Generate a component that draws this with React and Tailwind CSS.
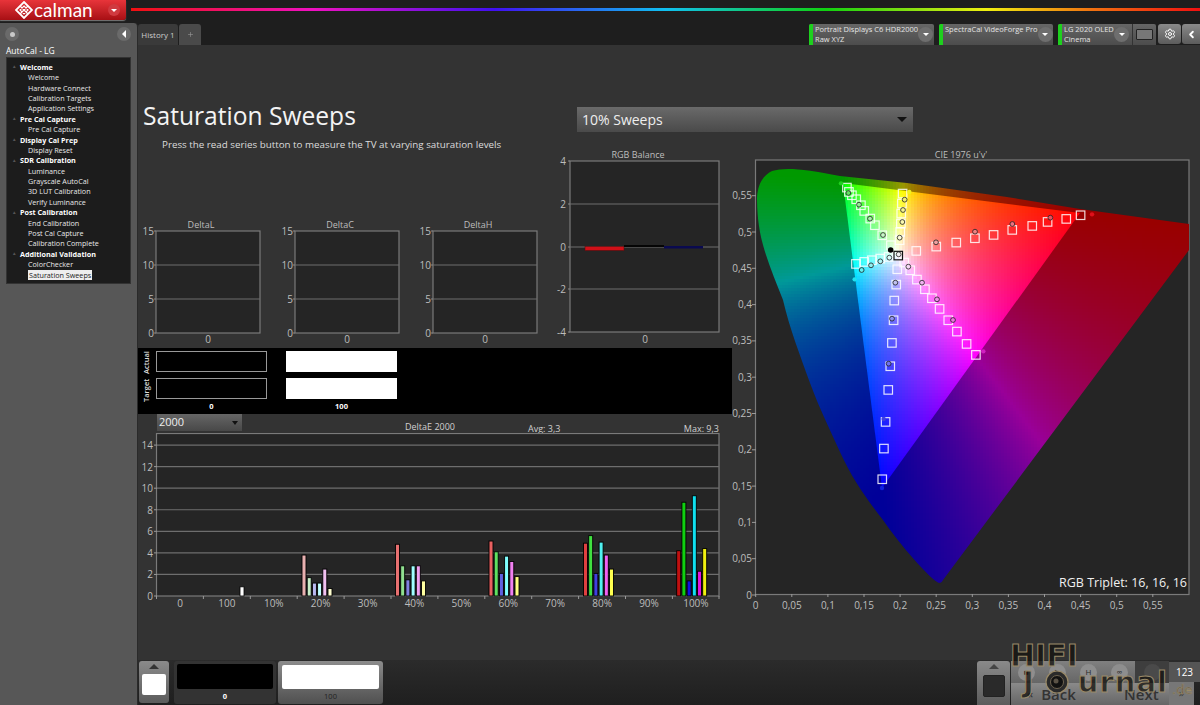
import { useMemo } from 'react'
import { Settings, Plus, ChevronLeft } from 'lucide-react'

const tree = [
  ['Welcome', ['Welcome', 'Hardware Connect', 'Calibration Targets', 'Application Settings']],
  ['Pre Cal Capture', ['Pre Cal Capture']],
  ['Display Cal Prep', ['Display Reset']],
  ['SDR Calibration', ['Luminance', 'Grayscale AutoCal', '3D LUT Calibration', 'Verify Luminance']],
  ['Post Calibration', ['End Calibration', 'Post Cal Capture', 'Calibration Complete']],
  ['Additional Validation', ['ColorChecker', 'Saturation Sweeps']],
]

// gamut triangle and white point, in page pixels
const R = [1080, 213]
const G = [843, 183]
const B = [882, 488]
const W = [898, 255]

const locus = 'M939 583 C931 580 900 545 883 520 C865 497 852 478 840 452 C828 425 820 410 810 383 C800 355 790 330 783 300 C775 280 768 263 763 245 C758 227 757 210 757 197 C758 185 762 176 772 171 C785 167 805 169 840 176 L907 183 L1007 197 L1080 209 L1189 224 L1189 250 L943 580 C942 582 941 583 939 583 Z'
const triangle = `M${R[0]} ${R[1]} L${G[0]} ${G[1]} L${B[0]} ${B[1]} Z`

function bary(x, y) {
  const d = (G[1] - B[1]) * (R[0] - B[0]) + (B[0] - G[0]) * (R[1] - B[1])
  const r = ((G[1] - B[1]) * (x - B[0]) + (B[0] - G[0]) * (y - B[1])) / d
  const g = ((B[1] - R[1]) * (x - B[0]) + (R[0] - B[0]) * (y - B[1])) / d
  return [r, g, 1 - r - g]
}

const whiteW = bary(W[0], W[1])

function colorAt(x, y, k, gamma) {
  const w = bary(x, y).map((v, i) => Math.max(v, 0) / whiteW[i])
  const m = Math.max(...w)
  const [r, g, b] = w.map(v => Math.round(255 * k * Math.pow(v / m, gamma)))
  return `rgb(${r},${g},${b})`
}

function cells(k, gamma) {
  const out = []
  for (let y = 165; y < 590; y += 3) {
    for (let x = 755; x < 1190; x += 3) {
      out.push(<rect key={`${x}-${y}`} x={x} y={y} width="3" height="3" fill={colorAt(x + 1.5, y + 1.5, k, gamma)} />)
    }
  }
  return out
}

const zx = v => 740 + v / 3
const zy = v => 150 + v / 3

const squares = [
  [1021, 195], [978, 206], [922, 215], [876, 227], [816, 239], [760, 254], [704, 264], [648, 277], [588, 289], [528, 302],
  [492, 337], [510, 360], [530, 388], [554, 417], [575, 444], [598, 476], [624, 510], [650, 544], [679, 581], [707, 614],
  [471, 357], [468, 403], [462, 451], [460, 510], [455, 578], [450, 648], [444, 719], [436, 815], [431, 895], [426, 987],
  [320, 112], [326, 125], [335, 135], [348, 147], [362, 165], [372, 182], [390, 205], [404, 225], [426, 255], [452, 285],
  [487, 130], [485, 160], [483, 190], [482, 220], [480, 245], [478, 270],
  [347, 341], [372, 335], [395, 330], [420, 325], [445, 320],
]

const dots = [
  [1056, 193, '#e0101a', 0], [931, 203, '#e85060', 1], [817, 222, '#ee7080', 1], [705, 245, '#f08080', 1], [588, 277, '#f0a0a0', 1],
  [303, 100, '#20d020', 0], [325, 129, '#60e060', 1], [357, 164, '#90ee90', 1], [390, 206, '#a8f0a8', 1], [429, 255, '#c8f8c8', 1],
  [508, 126, '#f0f020', 0], [494, 149, '#f0f070', 1], [489, 180, '#f5f590', 1], [487, 216, '#f8f8b0', 1], [479, 263, '#fcfcd8', 1],
  [344, 388, '#20e0f0', 0], [365, 360, '#60f0f0', 1], [393, 346, '#90f0f0', 1], [421, 334, '#b0f5f5', 1], [448, 323, '#d8fafa', 1],
  [730, 604, '#d020c0', 0], [639, 510, '#f070e0', 1], [591, 448, '#f090e8', 1], [546, 398, '#f0b0f0', 1], [505, 350, '#f8d8f8', 1],
  [426, 1014, '#1020e0', 0], [431, 807, '#4040e0', 0], [446, 641, '#7070f0', 1], [456, 506, '#9090f0', 1], [466, 398, '#c0c0f0', 1],
  [476, 313, '#f0f0f0', 1],
]

const barGroups = [
  [304, [3.8, 1.7, 1.2, 1.2, 2.5, 0.7], ['#e8b0b0', '#c8eec8', '#b8b8f0', '#c0ffff', '#f0c0f0', '#ffffd0']],
  [397.5, [4.8, 2.8, 1.5, 2.8, 2.8, 1.4], ['#e87070', '#90e090', '#8080e0', '#a0ffff', '#f0a0f0', '#ffffa0']],
  [491, [5.1, 4.1, 2.1, 3.7, 3.2, 1.8], ['#e86060', '#60e060', '#6060e0', '#80ffff', '#f080f0', '#ffff80']],
  [585.5, [4.9, 5.6, 2.1, 5.0, 3.8, 2.5], ['#e04040', '#40e040', '#4040e0', '#50f0f0', '#f060f0', '#ffff50']],
  [678.7, [4.2, 8.7, 1.4, 9.3, 2.3, 4.4], ['#c01010', '#10d010', '#1010e0', '#10e0f0', '#e010e0', '#f0f010']],
]

const deltaLabels = ['0', '100', '10%', '20%', '30%', '40%', '50%', '60%', '70%', '80%', '90%', '100%']

function Tick({ x, y, children, anchor = 'end' }) {
  return <text x={x} y={y} textAnchor={anchor} className="fill-[#bdbdbd] text-[10px]">{children}</text>
}

function DeltaChart({ title, left, width }) {
  const x = left + 18
  return (
    <svg width={width} height="200" viewBox={`${left} 148 ${width} 200`} className="shrink-0">
      <text x={x + 45} y="228" textAnchor="middle" className="fill-[#bdbdbd] text-[9px]">{title}</text>
      <rect x={x} y="231" width="104" height="102" fill="#252525" stroke="#7a7a7a" strokeWidth="1.2" />
      {[265, 299].map(y => <line key={y} x1={x} x2={x + 104} y1={y} y2={y} stroke="#6e6e6e" strokeWidth="1.2" />)}
      {[[15, 231], [10, 265], [5, 299], [0, 333]].map(([v, y]) => (
        <g key={v}>
          <line x1={x - 2} x2={x} y1={y} y2={y} stroke="#8a8a8a" />
          <Tick x={x - 2} y={y + 3.5}>{v}</Tick>
        </g>
      ))}
      <Tick x={x + 52} y="343" anchor="middle">0</Tick>
    </svg>
  )
}

function RgbBalance() {
  return (
    <svg width="179" height="200" viewBox="553 148 179 200" className="shrink-0">
      <text x="638" y="158" textAnchor="middle" className="fill-[#bdbdbd] text-[9px]">RGB Balance</text>
      <rect x="570" y="161" width="149" height="171" fill="#252525" stroke="#7a7a7a" strokeWidth="1.2" />
      {[204, 247, 289].map(y => <line key={y} x1="570" x2="719" y1={y} y2={y} stroke="#6e6e6e" strokeWidth="1.2" />)}
      {[[4, 161], [2, 204], [0, 247], [-2, 289], [-4, 332]].map(([v, y]) => (
        <g key={v}>
          <line x1="568" x2="570" y1={y} y2={y} stroke="#8a8a8a" />
          <Tick x="566" y={y + 3.5}>{v}</Tick>
        </g>
      ))}
      <rect x="585" y="246.5" width="39" height="4" fill="#d01018" stroke="#5a0c0c" strokeWidth="0.6" />
      <rect x="624" y="245" width="40" height="2" fill="#050505" />
      <rect x="664" y="246" width="39" height="2.5" fill="#0a0a50" />
      <Tick x="645" y="343" anchor="middle">0</Tick>
    </svg>
  )
}

function DeltaEChart() {
  const y0 = 596
  const step = 10.78
  return (
    <svg width="594" height="177" viewBox="138 433 594 177" className="block">
      <rect x="156.5" y="433.5" width="562.5" height="162.5" fill="#252525" stroke="#7a7a7a" strokeWidth="1.2" />
      {[2, 4, 6, 8, 10, 12, 14].map(v => (
        <line key={v} x1="156" x2="719" y1={y0 - v * step} y2={y0 - v * step} stroke="#6e6e6e" strokeWidth="1.2" />
      ))}
      {[0, 2, 4, 6, 8, 10, 12, 14].map(v => (
        <g key={v}>
          <line x1="154" x2="157" y1={y0 - v * step} y2={y0 - v * step} stroke="#9a9a9a" />
          <Tick x="153" y={y0 - v * step + 4}>{v}</Tick>
        </g>
      ))}
      {deltaLabels.map((l, i) => (
        <g key={l + i}>
          <line x1={156.5 + i * 46.9} x2={156.5 + i * 46.9} y1="596" y2="599" stroke="#9a9a9a" />
          <Tick x={180 + i * 46.9} y="607" anchor="middle">{l}</Tick>
        </g>
      ))}
      <line x1="719" x2="719" y1="596" y2="599" stroke="#9a9a9a" />
      <rect x="240" y={y0 - 0.85 * step} width="4" height={0.85 * step} fill="#fff" stroke="#000" strokeWidth="0.8" />
      {barGroups.map(([x, vals, cols]) => vals.map((v, i) => (
        <rect key={`${x}-${i}`} x={x - 2 + i * 5.2} y={y0 - v * step} width="4" height={v * step} fill={cols[i]} stroke="#000" strokeWidth="0.9" />
      )))}
    </svg>
  )
}

function CieChart() {
  const inner = useMemo(() => cells(1, 0.8), [])
  const outer = useMemo(() => cells(0.6, 1.05), [])
  const labels = ['0', '0,05', '0,1', '0,15', '0,2', '0,25', '0,3', '0,35', '0,4', '0,45', '0,5', '0,55']
  return (
    <svg width="468" height="470" viewBox="732 148 468 470" className="block">
      <defs>
        <clipPath id="locus"><path d={locus} /></clipPath>
        <clipPath id="gamut"><path d={triangle} /></clipPath>
      </defs>
      <text x="961" y="158" textAnchor="middle" className="fill-[#bdbdbd] text-[9px]">CIE 1976 u'v'</text>
      <rect x="755.5" y="160" width="433.5" height="434.5" fill="#252525" stroke="#7a7a7a" strokeWidth="1.2" />
      <g clipPath="url(#locus)" shapeRendering="crispEdges">{outer}</g>
      <g clipPath="url(#gamut)" shapeRendering="crispEdges">{inner}</g>
      {labels.map((l, i) => (
        <g key={l}>
          <line x1="752" x2="756" y1={595 - i * 36.3} y2={595 - i * 36.3} stroke="#9a9a9a" />
          <Tick x="752" y={595 - i * 36.3 + 3.5}>{l}</Tick>
        </g>
      ))}
      {labels.map((l, i) => (
        <g key={l}>
          <line x1={755.7 + i * 36.1} x2={755.7 + i * 36.1} y1="594" y2="597" stroke="#9a9a9a" />
          <Tick x={755.7 + i * 36.1} y="609" anchor="middle">{l}</Tick>
        </g>
      ))}
      {squares.map(([x, y]) => (
        <rect key={`${x}-${y}`} x={zx(x) - 4} y={zy(y) - 4} width="8.5" height="8.5" fill="none" stroke="#fff" strokeOpacity="0.85" strokeWidth="1.2" />
      ))}
      <rect x={zx(474) - 4} y={zy(316) - 4} width="8.5" height="8.5" fill="none" stroke="#111" strokeWidth="1.2" />
      {dots.map(([x, y, c, ring]) => (
        <circle key={`${x}-${y}`} cx={zx(x)} cy={zy(y)} r={ring ? 2.4 : 2.2} fill={c} stroke={ring ? '#222' : 'none'} strokeWidth="0.8" />
      ))}
      <circle cx={zx(452)} cy={zy(300)} r="2.8" fill="#000" />
      <text x="1187" y="587" textAnchor="end" className="fill-[#f0f0f0] text-[12.5px]">RGB Triplet: 16, 16, 16</text>
    </svg>
  )
}

function RoundArrow() {
  return (
    <div className="flex h-[15px] w-[15px] items-center justify-center rounded-full bg-[#6e6e6e]">
      <div className="h-0 w-0 border-x-[3.5px] border-t-[3px] border-x-transparent border-t-white" />
    </div>
  )
}

function Device({ lines, width, children }) {
  return (
    <div style={{ width }} className="flex h-[21px] shrink-0 items-stretch overflow-hidden rounded-t-[2px] bg-gradient-to-b from-[#666] to-[#4c4c4c]">
      <div className="w-[4px] shrink-0 bg-[#1ed01e]" />
      <div className="flex-1 whitespace-nowrap pl-[2px] pt-[1px] text-[7.5px] leading-[9.8px] text-[#e4e4e4]">
        {lines.map(l => <div key={l}>{l}</div>)}
      </div>
      <div className="flex items-center pr-[3px]"><RoundArrow /></div>
      {children}
    </div>
  )
}

function Sidebar() {
  return (
    <aside className="flex w-[138px] shrink-0 flex-col rounded-tr-[4px] border-r border-[#2a2a2a] bg-[#575757]">
      <div className="flex h-[21px] items-center justify-between pl-[5px] pr-[6px] pt-[1px]">
        <div className="flex h-[14px] w-[14px] items-center justify-center rounded-full bg-[#6a6a6a]">
          <div className="h-[5px] w-[5px] rounded-full bg-[#c8c8c8]" />
        </div>
        <div className="flex h-[14px] w-[14px] items-center justify-center rounded-full bg-[#6a6a6a]">
          <div className="h-0 w-0 border-y-[4px] border-r-[4px] border-y-transparent border-r-white" />
        </div>
      </div>
      <div className="pl-[6px] pt-[1px] text-[8.5px] leading-[12px] text-white">AutoCal - LG</div>
      <div className="mx-[6px] h-[227px] border border-[#333] bg-[#1c1c1c] pt-[4px]">
        {tree.map(([head, items]) => (
          <div key={head}>
            <div className="flex h-[10.4px] items-center pl-[6px] text-[7.2px] font-bold text-white">
              <span className="mr-[4px] text-[5px] text-[#555]">▴</span>{head}
            </div>
            {items.map(item => (
              <div key={item} className="flex h-[10.4px] items-center pl-[21px] text-[7.2px] text-[#e8e8e8]">
                <span className={item === 'Saturation Sweeps' ? 'bg-[#eee] px-px text-[#222]' : ''}>{item}</span>
              </div>
            ))}
          </div>
        ))}
      </div>
    </aside>
  )
}

function Swatch({ white }) {
  return <div className={`h-[21px] w-[111px] ${white ? 'bg-white' : 'border border-[#999] bg-black'}`} />
}

function ColorStrip() {
  return (
    <div className="flex h-[66px] bg-black pt-[3px]">
      <div className="flex w-[18px] flex-col items-center gap-[5px] text-[7.5px] font-semibold text-[#ddd]">
        {['Actual', 'Target'].map(l => (
          <div key={l} className="flex h-[23px] rotate-180 items-center justify-center [writing-mode:vertical-rl]">{l}</div>
        ))}
      </div>
      <div className="flex w-[130px] flex-col gap-[6px]">
        <Swatch />
        <Swatch />
        <div className="-mt-[3px] w-[111px] text-center text-[7.5px] font-bold leading-[9px] text-white">0</div>
      </div>
      <div className="flex w-[111px] flex-col gap-[6px]">
        <Swatch white />
        <Swatch white />
        <div className="-mt-[3px] text-center text-[7.5px] font-bold leading-[9px] text-white">100</div>
      </div>
    </div>
  )
}

function RoundKey({ children, dark }) {
  return (
    <div className={`flex w-[31px] items-center justify-center ${dark ? 'flex-1 bg-[#3e3e3e]' : 'bg-gradient-to-b from-[#808080] to-[#666]'}`}>
      <div className={`flex h-[17px] w-[17px] items-center justify-center rounded-full text-[8px] text-[#2a2a2a] ${dark ? 'bg-[#4a4a4a]' : 'bg-[#8e8e8e]'}`}>{children}</div>
    </div>
  )
}

function Bottom() {
  return (
    <div className="relative flex h-[45px] items-start bg-gradient-to-b from-[#2b2b2b] to-[#1f1f1f] pl-px pt-px">
      <div className="flex h-[42px] w-[30px] flex-col items-center rounded-[3px] bg-gradient-to-b from-[#8a8a8a] to-[#5c5c5c] pt-[3px]">
        <div className="h-0 w-0 border-x-[5px] border-b-[5px] border-x-transparent border-b-[#333]" />
        <div className="mt-[5px] h-[21px] w-[24px] rounded-[2px] bg-white" />
      </div>
      <div className="ml-[5px] h-[43px] w-[102px] rounded-[3px] bg-[#333] px-[3px] pt-[3px]">
        <div className="h-[25px] rounded-[2px] bg-black" />
        <div className="pt-[3px] text-center text-[7.5px] font-bold leading-[9px] text-white">0</div>
      </div>
      <div className="ml-[2px] h-[43px] w-[105px] rounded-[3px] bg-gradient-to-b from-[#8c8c8c] to-[#505050] px-[4px] pt-[4px]">
        <div className="h-[24px] rounded-[2px] bg-white" />
        <div className="pt-[3px] text-center text-[7.5px] leading-[9px] text-[#222]">100</div>
      </div>
      <div className="flex-1" />
      <div className="flex h-[44px] w-[33px] flex-col items-center rounded-t-[3px] bg-gradient-to-b from-[#8a8a8a] to-[#5c5c5c] pt-[3px]">
        <div className="h-0 w-0 border-x-[5px] border-b-[5px] border-x-transparent border-b-[#444]" />
        <div className="mt-[6px] h-[22px] w-[22px] rounded-[2px] border border-[#222] bg-[#2a2a2a]" />
      </div>
      <div className="ml-px flex w-[158px] flex-col">
        <div className="flex h-[22px]">
          <RoundKey>■</RoundKey>
          <RoundKey>▶</RoundKey>
          <RoundKey>H</RoundKey>
          <RoundKey>∞</RoundKey>
          <RoundKey dark />
        </div>
        <div className="flex h-[22px] bg-gradient-to-b from-[#8a8a8a] to-[#666] text-[15px] font-semibold text-[#333]">
          <div className="flex w-[94px] items-center pl-[16px]"><span className="mr-[8px] text-[11px]">«</span>Back</div>
          <div className="flex flex-1 items-center pl-[19px]">Next</div>
        </div>
      </div>
      <div className="flex w-[31px] flex-col">
        <div className="mt-px flex h-[20px] items-center justify-center bg-[#555] text-[10px] text-white">123</div>
        <div className="flex h-[23px] w-[25px] items-center justify-center bg-[#777] text-[11px] text-[#333]">»</div>
      </div>

      {/* watermark lying over the transport buttons */}
      <div className="pointer-events-none absolute bottom-0 right-0 h-[62px] w-[190px] font-['DejaVu_Sans',sans-serif] font-bold">
        <div className="absolute left-0 top-[-2px] text-[30px] leading-[30px] text-[rgba(20,18,14,0.75)] [-webkit-text-stroke:1px_#9a8a68]">HIFI</div>
        <div className="absolute left-[13px] top-[22px] flex text-[29px] leading-[34px] tracking-[1px] text-[rgba(20,18,14,0.75)] [-webkit-text-stroke:1px_#9a8a68]">
          <span>J</span>
          <span className="w-[43px]" aria-hidden="true" />
          <span>urnal</span>
        </div>
        <div className="absolute left-[162px] top-[40px] text-[13px] font-normal leading-[14px] text-[rgba(20,18,14,0.5)] [-webkit-text-stroke:0.6px_#9a8a68]">.de</div>
        <svg width="28" height="28" viewBox="0 0 28 28" className="absolute left-[33px] top-[25px]">
          <circle cx="14" cy="14" r="11" fill="#2a2a2a" stroke="#9a8a68" strokeWidth="1.2" />
          <circle cx="14" cy="14" r="6.5" fill="#111" stroke="#6e6350" />
          <circle cx="13" cy="13" r="2.5" fill="#5a5246" />
        </svg>
      </div>
    </div>
  )
}

export default function App() {
  return (
    <div className="flex h-[705px] w-[1200px] flex-col overflow-hidden bg-[#1e1e1e] font-['Open_Sans','Noto_Sans',sans-serif]">
      <header className="flex h-[23px] shrink-0 items-start">
        <div className="flex h-[20px] w-[126px] shrink-0 items-center rounded-br-[3px] bg-gradient-to-b from-[#e8343a] to-[#a80f14] pl-[15px] shadow-[0_1px_1px_#777]">
          <svg width="18" height="18" viewBox="0 0 18 18" className="shrink-0">
            <path d="M9 1 L17 9 L9 17 L1 9 Z" fill="none" stroke="#fff" strokeWidth="1.8" />
            <path d="M9 5 L13 9 L9 13 L5 9 Z M5 5 L13 13 M13 5 L5 13" fill="none" stroke="#fff" strokeWidth="1.2" />
          </svg>
          <span className="ml-[1px] font-['Lato',sans-serif] text-[19px] leading-[20px] text-white">calman</span>
          <div className="ml-auto mr-[6px] flex h-[12px] w-[12px] items-center justify-center rounded-full bg-[#d03a40]">
            <div className="h-0 w-0 border-x-[3px] border-t-[3px] border-x-transparent border-t-white" />
          </div>
        </div>
        <div className="ml-[5px] mt-[8px] h-[3px] flex-1 bg-[linear-gradient(90deg,#f01010_0%,#f010c0_17%,#4010f0_34%,#10c0f0_50%,#10d010_65%,#f0f010_80%,#f07010_90%,#f01010_100%)]" />
      </header>

      <div className="flex min-h-0 flex-1">
        <Sidebar />
        <main className="flex min-w-0 flex-1 flex-col">
          <div className="flex h-[22px] shrink-0 items-end">
            <div className="flex h-[21px] w-[40px] items-center justify-center rounded-t-[3px] bg-[#3a3a3a] text-[8px] text-[#ccc]">History 1</div>
            <div className="ml-px flex h-[21px] w-[22px] items-center justify-center rounded-t-[3px] bg-[#4a4a4a]">
              <Plus size={7} className="text-[#999]" />
            </div>
            <div className="ml-auto flex items-end gap-[5px]">
              <Device lines={['Portrait Displays C6 HDR2000', 'Raw XYZ']} width={125} />
              <Device lines={['SpectraCal VideoForge Pro']} width={114} />
              <Device lines={['LG 2020 OLED', 'Cinema']} width={98}>
                <div className="flex w-[24px] items-center justify-center border-l border-[#333]">
                  <div className="h-[11px] w-[17px] rounded-[1px] border border-[#222] bg-[#777]" />
                </div>
              </Device>
            </div>
            <div className="flex items-end gap-px pb-px pl-[2px]">
              <div className="flex h-[20px] w-[23px] items-center justify-center rounded-[3px] bg-gradient-to-b from-[#8a8a8a] to-[#5c5c5c]">
                <Settings size={12} className="text-white" />
              </div>
              <div className="flex h-[20px] w-[18px] items-center justify-center rounded-l-[3px] bg-gradient-to-b from-[#8a8a8a] to-[#5c5c5c]">
                <ChevronLeft size={11} strokeWidth={4} className="text-white" />
              </div>
            </div>
          </div>

          <div className="flex min-h-0 flex-1 flex-col bg-[#333]">
            <div className="flex h-[103px] shrink-0 items-start">
              <div className="w-[439px] pl-[5px] pt-[56px]">
                <h1 className="text-[24.6px] font-normal leading-[30px] text-[#f4f4f4]">Saturation Sweeps</h1>
                <p className="pl-[19px] pt-[9px] text-[9.8px] leading-[10px] text-[#ddd]">Press the read series button to measure the TV at varying saturation levels</p>
              </div>
              <div className="mt-[62px] flex h-[25px] w-[336px] items-center justify-between bg-gradient-to-b from-[#6a6a6a] to-[#4a4a4a] pl-[5px] pr-[6px] text-[14px] text-[#eee]">
                10% Sweeps
                <div className="h-0 w-0 border-x-[5px] border-t-[5px] border-x-transparent border-t-[#111]" />
              </div>
            </div>

            <div className="flex">
              <div className="w-[594px] shrink-0">
                <div className="flex h-[200px]">
                  <DeltaChart title="DeltaL" left={138} width={139} />
                  <DeltaChart title="DeltaC" left={277} width={138} />
                  <DeltaChart title="DeltaH" left={415} width={138} />
                  <RgbBalance />
                </div>
                <ColorStrip />
                <div className="flex h-[19px] items-start text-[9px] text-[#d0d0d0]">
                  <div className="ml-[19px] flex h-[17px] w-[85px] items-center justify-between bg-gradient-to-b from-[#666] to-[#484848] pl-[2px] pr-[4px] text-[11px] text-[#eee]">
                    2000
                    <div className="h-0 w-0 border-x-[3.5px] border-t-[4px] border-x-transparent border-t-[#111]" />
                  </div>
                  <span className="ml-[163px] pt-[7px] leading-[12px]">DeltaE 2000</span>
                  <span className="ml-[73px] pt-[9px] leading-[12px]">Avg: 3,3</span>
                  <span className="ml-auto mr-[13px] pt-[9px] leading-[12px]">Max: 9,3</span>
                </div>
                <DeltaEChart />
              </div>
              <CieChart />
            </div>
          </div>

          <Bottom />
        </main>
      </div>
    </div>
  )
}
